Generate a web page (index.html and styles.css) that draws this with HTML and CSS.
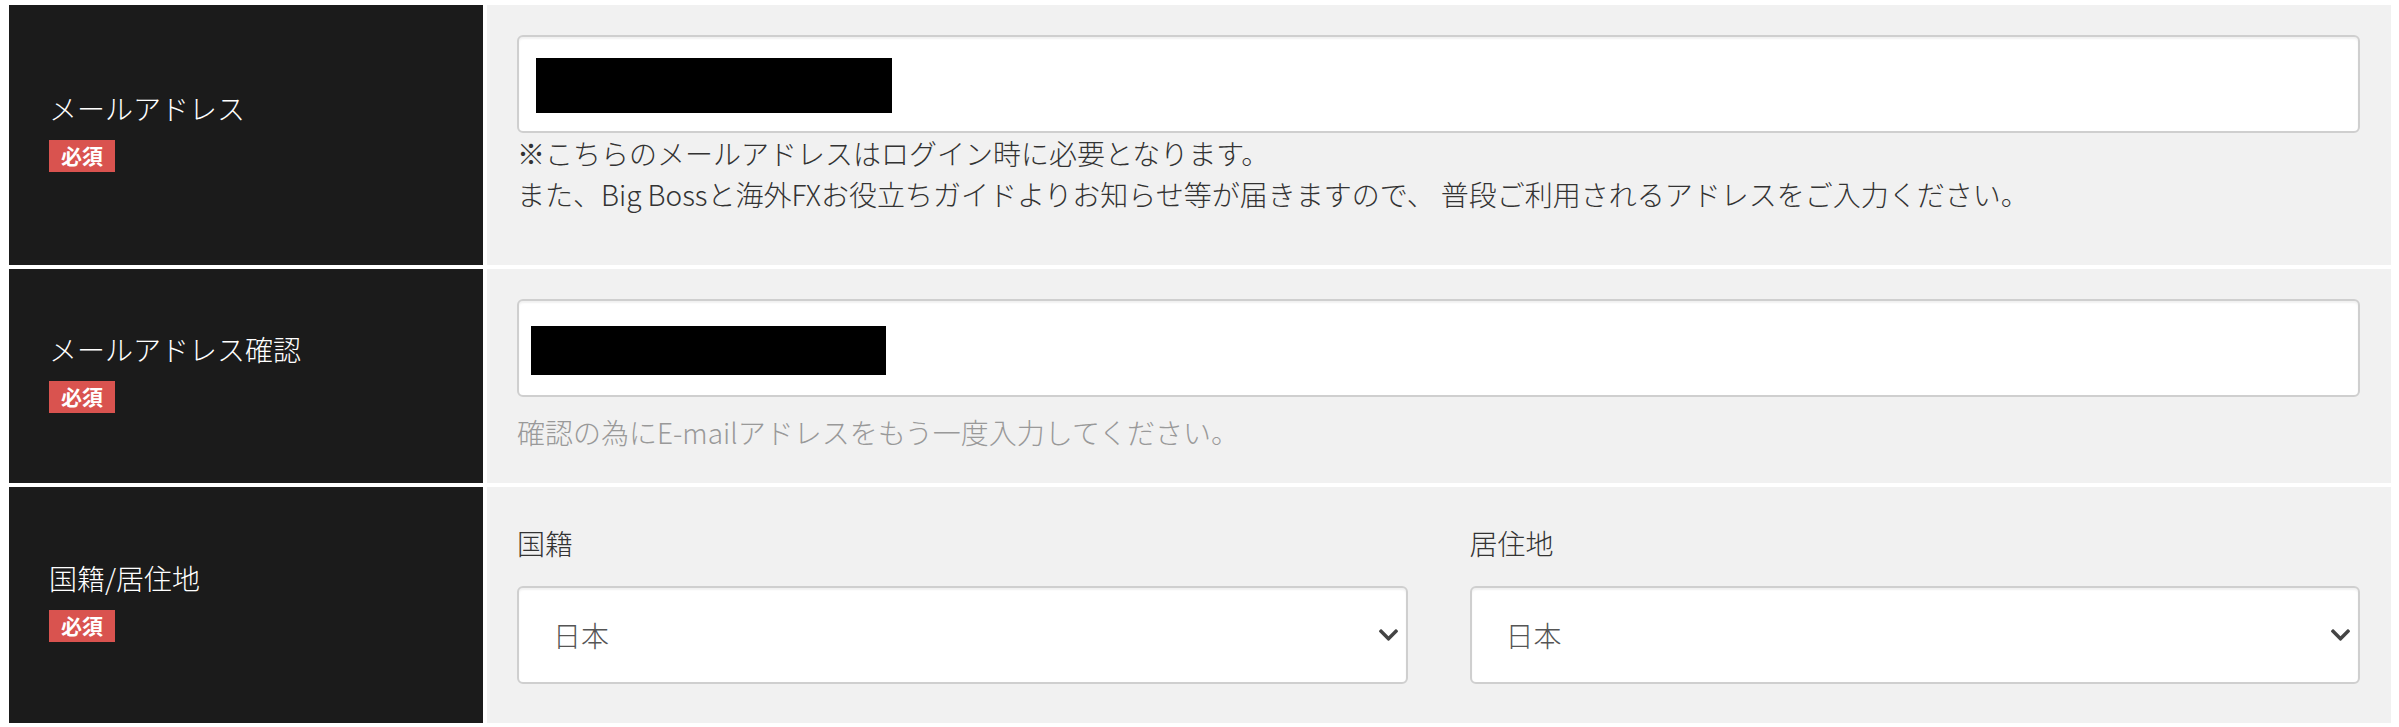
FILE: index.html
```html
<!DOCTYPE html>
<html lang="ja">
<head>
<meta charset="utf-8">
<title>登録フォーム</title>
<link rel="stylesheet" href="styles.css">
</head>
<body>
<div class="form">
  <div class="row">
    <div class="head">
      <div class="head-label">メールアドレス</div>
      <div class="badge-wrap"><span class="badge">必須</span></div>
    </div>
    <div class="body">
      <div class="field"><span class="redact redact-a"></span></div>
      <p class="note">※こちらのメールアドレスはログイン時に必要となります。<br>また、Big Bossと海外FXお役立ちガイドよりお知らせ等が届きますので、 普段ご利用されるアドレスをご入力ください。</p>
    </div>
  </div>
  <div class="row">
    <div class="head">
      <div class="head-label">メールアドレス確認</div>
      <div class="badge-wrap"><span class="badge">必須</span></div>
    </div>
    <div class="body">
      <div class="field"><span class="redact redact-b"></span></div>
      <p class="hint">確認の為にE-mailアドレスをもう一度入力してください。</p>
    </div>
  </div>
  <div class="row">
    <div class="head">
      <div class="head-label">国籍/居住地</div>
      <div class="badge-wrap"><span class="badge">必須</span></div>
    </div>
    <div class="body body-split">
      <div class="group">
        <div class="group-label">国籍</div>
        <div class="select">
          <span>日本</span>
          <svg class="chev" viewBox="5 123 438 266" width="19" height="12" aria-hidden="true"><path d="M207.029 381.476L12.686 187.132c-9.373-9.373-9.373-24.569 0-33.941l22.667-22.667c9.357-9.357 24.522-9.375 33.901-.04L224 284.505l154.745-154.021c9.379-9.335 24.544-9.317 33.901.04l22.667 22.667c9.373 9.373 9.373 24.569 0 33.941L240.971 381.476c-9.373 9.372-24.569 9.372-33.942 0z"/></svg>
        </div>
      </div>
      <div class="group">
        <div class="group-label">居住地</div>
        <div class="select">
          <span>日本</span>
          <svg class="chev" viewBox="5 123 438 266" width="19" height="12" aria-hidden="true"><path d="M207.029 381.476L12.686 187.132c-9.373-9.373-9.373-24.569 0-33.941l22.667-22.667c9.357-9.357 24.522-9.375 33.901-.04L224 284.505l154.745-154.021c9.379-9.335 24.544-9.317 33.901.04l22.667 22.667c9.373 9.373 9.373 24.569 0 33.941L240.971 381.476c-9.373 9.372-24.569 9.372-33.942 0z"/></svg>
        </div>
      </div>
    </div>
  </div>
</div>
</body>
</html>
```

FILE: styles.css
```css
html, body {
  margin: 0;
  padding: 0;
  background: #ffffff;
}

body {
  font-family: "Noto Sans CJK JP", "Noto Sans", sans-serif;
  font-size: 28px;
  font-weight: 300;
  color: #333333;
}

.form {
  display: flex;
  flex-direction: column;
  gap: 4px;
  padding: 5px 8px 0 9px;
}

.row {
  display: grid;
  grid-template-columns: 474px 1fr;
  gap: 4px;
}

.head {
  background: #1b1b1b;
  color: #ffffff;
  padding-left: 40px;
  display: flex;
  flex-direction: column;
  justify-content: center;
}

.head-label {
  line-height: 40px;
}

.badge-wrap {
  margin: 10px 0 10px;
  line-height: 1;
}

.badge {
  display: inline-block;
  background: #d9534f;
  color: #ffffff;
  font-size: 21px;
  font-weight: 700;
  line-height: 22px;
  padding: 4px 12px 6px;
}

.body {
  background: #f1f1f1;
  padding: 30px 31px 30px 30px;
}

.field {
  box-sizing: border-box;
  height: 98px;
  background: #ffffff;
  border: 2px solid #cfcfcf;
  border-radius: 6px;
  box-shadow: inset 0 2px 2px rgba(0, 0, 0, 0.06);
  display: flex;
  align-items: center;
}

.redact {
  display: block;
  background: #000000;
}

.redact-a {
  width: 356px;
  height: 55px;
  margin: 3px 0 0 17px;
}

.redact-b {
  width: 355px;
  height: 49px;
  margin: 5px 0 0 12px;
}

.note {
  margin: 0 0 20px;
  line-height: 41px;
  color: #333333;
}

.hint {
  margin: 15px 0 0;
  line-height: 41px;
  color: #999999;
}

.body-split {
  display: grid;
  grid-template-columns: 1fr 1fr;
  column-gap: 62px;
}

.group-label {
  line-height: 40px;
  margin: 6px 0 23px;
  color: #333333;
}

.select {
  box-sizing: border-box;
  height: 98px;
  background: #ffffff;
  border: 2px solid #cfcfcf;
  border-radius: 6px;
  box-shadow: inset 0 2px 2px rgba(0, 0, 0, 0.06);
  display: flex;
  align-items: center;
  justify-content: space-between;
  padding: 0 8px 0 34px;
  color: #555555;
  margin-bottom: 9px;
}

.chev {
  fill: #444444;
  display: block;
}
```
